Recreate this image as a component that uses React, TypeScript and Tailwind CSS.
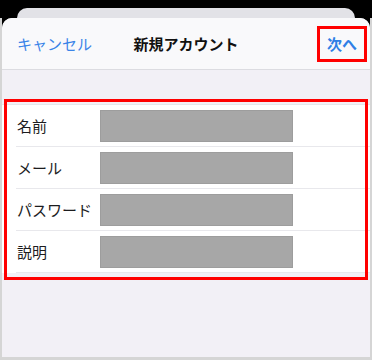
import React from "react";

const fields = ["名前", "メール", "パスワード", "説明"];

export default function App() {
  return (
    <div
      className="w-[372px] h-[360px] bg-black flex flex-col overflow-hidden"
      style={{ fontFamily: '"Noto Sans CJK JP", "Noto Sans", sans-serif' }}
    >
      {/* card behind the sheet */}
      <div className="mx-[17px] mt-[8px] h-[10px] shrink-0 rounded-t-[10px] bg-[#e2e2e7]" />

      {/* frame */}
      <div className="flex-1 flex flex-col border-x-2 border-b-[3px] border-[#d5d5d5]">
        <div className="flex-1 flex flex-col rounded-t-[10px] overflow-hidden bg-[#f2f0f6]">
          {/* Header */}
          <div className="relative h-[52px] shrink-0 flex items-center justify-between bg-[#f9f9fb] border-b border-[#dcdce1]">
            <span className="pl-[15px] text-[15px] leading-none text-[#3b84e8]">
              キャンセル
            </span>
            <span className="absolute left-1/2 -translate-x-1/2 text-[15px] leading-none font-bold text-[#111]">
              新規アカウント
            </span>
            <div className="mr-[3px] w-[50px] h-[36px] border-[3px] border-[#ff0000] flex items-center justify-center">
              <span className="text-[15px] leading-none font-bold text-[#2f7fe6]">
                次へ
              </span>
            </div>
          </div>

          {/* Body */}
          <div className="pt-[34px]">
            <div className="relative bg-white border-t border-[#e6e6ea]">
              {fields.map((label) => (
                <div key={label} className="ml-[14px] h-[42px] flex items-center border-b border-[#e8e8ec]">
                  <span className="w-[84px] pl-[1px] text-[15px] leading-none text-[#1c1c1e] whitespace-nowrap">
                    {label}
                  </span>
                  <div className="w-[193px] h-[32px] bg-[#a7a7a7] border border-[#9d9d9d]" />
                </div>
              ))}
              {/* annotation box */}
              <div className="pointer-events-none absolute left-[2px] right-[2px] top-[-6px] bottom-[-7px] border-[3px] border-[#ff0000]" />
            </div>
          </div>
        </div>
      </div>
    </div>
  );
}
